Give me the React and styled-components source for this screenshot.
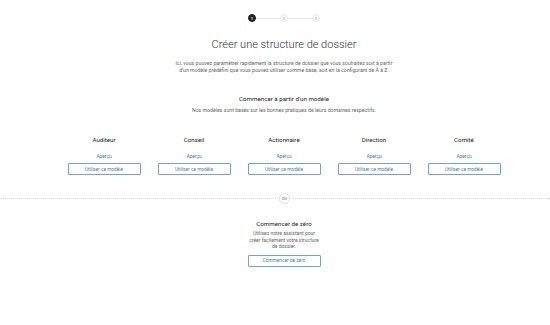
import React from 'react'
import styled, { createGlobalStyle } from 'styled-components'

const GlobalStyle = createGlobalStyle`
  html, body {
    margin: 0;
    padding: 0;
    background: #fff;
  }
  body {
    font-family: Roboto, 'Noto Sans', sans-serif;
    color: #333;
  }
`

const templates = ['Auditeur', 'Conseil', 'Actionnaire', 'Direction', 'Comité']

const Page = styled.div`
  width: 550px;
  height: 325px;
  overflow: hidden;
`

const Centered = styled.section`
  padding-left: 18px;
  display: flex;
  flex-direction: column;
  align-items: center;
`

const Stepper = styled.div`
  display: flex;
  align-items: center;
  margin-top: 14px;
`

const Step = styled.div`
  width: 8px;
  height: 8px;
  box-sizing: border-box;
  border-radius: 50%;
  display: flex;
  align-items: center;
  justify-content: center;
  font-size: 4px;
  font-weight: 700;
  background: ${(p) => (p.$active ? '#222' : '#f7f7f7')};
  color: ${(p) => (p.$active ? '#fff' : '#ccc')};
  border: 1px solid ${(p) => (p.$active ? '#222' : '#ebebeb')};
`

const StepLine = styled.div`
  width: 24px;
  height: 1px;
  background: #e6e6e6;
`

const Title = styled.h1`
  margin: 15px 0 0;
  font-size: 11px;
  line-height: 16px;
  font-weight: 300;
  color: #333;
`

const Lead = styled.p`
  margin: 7px 0 0;
  width: 222px;
  text-align: center;
  font-size: 5.2px;
  line-height: 7px;
  color: #666;
`

const SubTitle = styled.h2`
  margin: 21px 0 0;
  font-size: 6.2px;
  line-height: 9px;
  font-weight: 400;
  color: #222;
`

const SubLead = styled.p`
  margin: 3px 0 0;
  font-size: 5.2px;
  line-height: 7px;
  color: #666;
`

const Grid = styled.div`
  margin-top: 22px;
  display: grid;
  grid-template-columns: repeat(5, 90px);
`

const Card = styled.div`
  display: flex;
  flex-direction: column;
  align-items: center;
`

const CardTitle = styled.h3`
  margin: 0;
  font-size: 6.2px;
  line-height: 9px;
  font-weight: 400;
  color: #222;
`

const Preview = styled.a`
  margin-top: 9px;
  font-size: 4.8px;
  line-height: 6px;
  color: #3a78c4;
  text-decoration: none;
`

const OutlineButton = styled.button`
  margin-top: ${(p) => p.$gap || 0}px;
  width: 73px;
  height: 12px;
  padding: 0;
  box-sizing: border-box;
  border: 1px solid #74a0d6;
  border-radius: 1px;
  background: #fff;
  font-family: inherit;
  font-size: 4.8px;
  color: #4a7cbd;
  cursor: pointer;
`

const Divider = styled.div`
  margin-top: 18px;
  display: flex;
  align-items: center;
`

const DottedLine = styled.div`
  flex: ${(p) => (p.$fixed ? `0 0 ${p.$fixed}px` : '1')};
  border-top: 1px dotted #dcdcdc;
`

const OrBadge = styled.div`
  width: 11px;
  height: 11px;
  box-sizing: border-box;
  border: 1px solid #dedede;
  border-radius: 50%;
  display: flex;
  align-items: center;
  justify-content: center;
  font-size: 3.8px;
  color: #555;
  margin: 0 1px;
`

const ScratchTitle = styled(SubTitle)`
  margin-top: 16px;
`

const ScratchLead = styled.p`
  margin: 1px 0 0;
  width: 72px;
  text-align: center;
  font-size: 5px;
  line-height: 6.6px;
  color: #666;
`

export default function App() {
  return (
    <Page>
      <GlobalStyle />
      <Centered>
        <Stepper>
          <Step $active>1</Step>
          <StepLine />
          <Step>2</Step>
          <StepLine />
          <Step>3</Step>
        </Stepper>
        <Title>Créer une structure de dossier</Title>
        <Lead>
          Ici, vous pouvez paramétrer rapidement la structure de dossier que vous souhaitez soit à partir
          d'un modèle prédéfini que vous pouvez utiliser comme base, soit en la configurant de A à Z.
        </Lead>
        <SubTitle>Commencer à partir d'un modèle</SubTitle>
        <SubLead>Nos modèles sont basés sur les bonnes pratiques de leurs domaines respectifs.</SubLead>
        <Grid>
          {templates.map((name) => (
            <Card key={name}>
              <CardTitle>{name}</CardTitle>
              <Preview href="#">Aperçu</Preview>
              <OutlineButton $gap={3}>Utiliser ce modèle</OutlineButton>
            </Card>
          ))}
        </Grid>
      </Centered>
      <Divider>
        <DottedLine $fixed={278} />
        <OrBadge>OU</OrBadge>
        <DottedLine />
      </Divider>
      <Centered>
        <ScratchTitle>Commencer de zéro</ScratchTitle>
        <ScratchLead>
          Utilisez notre assistant pour créer facilement votre structure de dossier.
        </ScratchLead>
        <OutlineButton $gap={5}>Commencer de zéro</OutlineButton>
      </Centered>
    </Page>
  )
}
